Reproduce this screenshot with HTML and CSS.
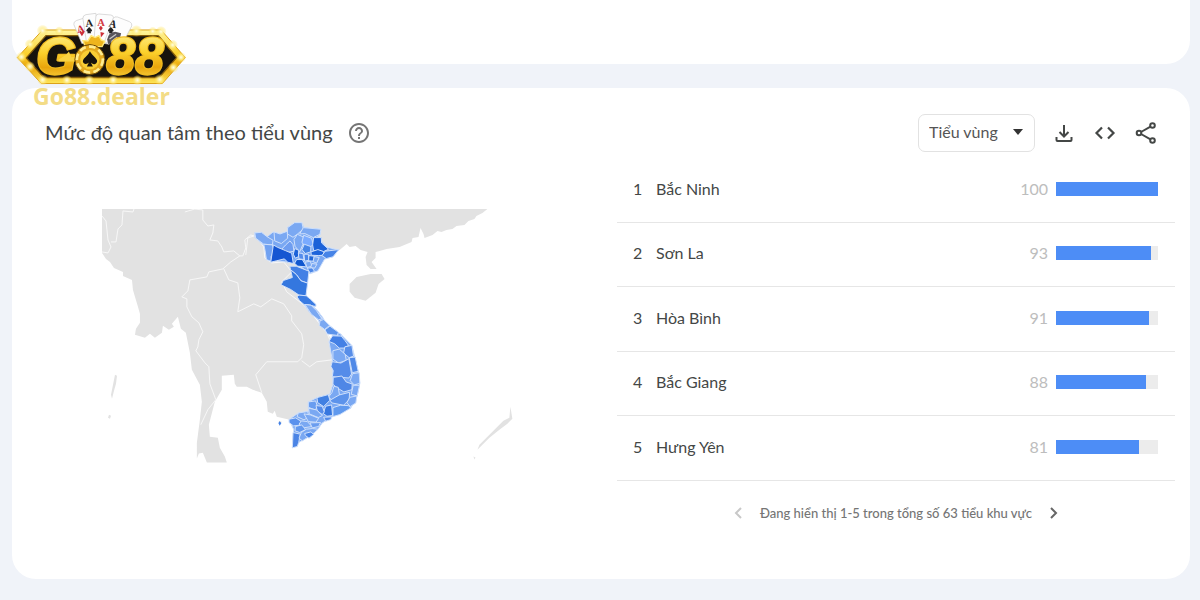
FILE: index.html
```html
<!DOCTYPE html>
<html lang="vi">
<head>
<meta charset="utf-8">
<meta name="viewport" content="width=device-width, initial-scale=1">
<title>Mức độ quan tâm theo tiểu vùng</title>
<link rel="stylesheet" href="styles.css">
</head>
<body>
<a class="brand" href="#" aria-label="Go88.dealer">
  <svg class="brand-logo" viewBox="45 35 520 225" aria-hidden="true">
    <defs>
      <linearGradient id="gold" x1="0" y1="0" x2="0" y2="1"><stop offset="0" stop-color="#fff6a0"/><stop offset=".45" stop-color="#fbd02b"/><stop offset=".7" stop-color="#e9a50c"/><stop offset="1" stop-color="#ffe658"/></linearGradient>
      <radialGradient id="glow"><stop offset="0" stop-color="#fffde8"/><stop offset=".35" stop-color="#fff2a0" stop-opacity=".9"/><stop offset="1" stop-color="#ffdf50" stop-opacity="0"/></radialGradient>
    </defs>
    <path d="M52 172 128 89H484L557 172 488 250H124Z" fill="url(#gold)" stroke="#dca117" stroke-width="3"/>
    <path d="M79 173 138 106H476L531 172 478 232H132Z" fill="#17130d" stroke="#875e0b" stroke-width="4"/>
    <g fill="#fdfdfd" stroke="#c9c9c9" stroke-width="2">
      <path d="M222 73q-2-8 7-12l27-9 30 70-40 8z"/><path d="M249 54q0-9 9-11l30-4 12 80-40 8z"/>
      <path d="M288 49q1-8 9-8l36 3q8 1 8 8l-13 80-46-8z"/><path d="M340 55q4-8 13-5l36 14q9 4 7 13l-18 34-66 18z"/>
    </g>
    <g font-family="Liberation Serif" font-weight="700" font-size="32">
      <text x="230" y="97" fill="#cc3038" transform="rotate(-12 240 85)">A</text><text x="257" y="79" fill="#222" transform="rotate(-6 268 70)">A</text>
      <text x="292" y="76" fill="#d33b44">A</text><text x="328" y="81" fill="#222" transform="rotate(15 338 70)">A</text>
    </g>
    <path fill="#cc3038" d="M240 98c-6-5 3-9 6-2 3-7 11-2 6 3l-6 9zM303 76l6 7-6 8-6-8z"/>
    <path fill="#222" d="M268 80q15 13 4 14l2 5h-12l2-5q-11-1 4-14zM333 80q15 13 4 14l2 5h-12l2-5q-11-1 4-14z"/>
    <path d="M302 95l12 3-11 14z" fill="#cc3038"/>
    <path d="M322 118q3-22 24-24l18 5-6 24-33 8z" fill="#57545a"/>
    <path d="M329 116l20-14m-14 22 17-13" stroke="#c8c8c8" stroke-width="4"/>
    <path d="M249 121 264 122 274 106 286 112 297 106 304 119 315 123 307 139H256Z" fill="#eeb51d" stroke="#ffe878" stroke-width="4"/>
    <g font-family="Liberation Sans" font-weight="700" font-style="italic" fill="url(#gold)" stroke="#f0bb22" stroke-width="7" paint-order="stroke" stroke-linejoin="round">
      <text x="108" y="221" font-size="156">G</text><text x="319" y="220" font-size="156">88</text>
    </g>
    <path d="M176 178 198 164 207 154 214 171 232 169V184H176Z" fill="#f9d242"/>
    <circle cx="270" cy="178" r="45" fill="#e4aa20" stroke="#684607" stroke-width="3"/>
    <circle cx="270" cy="178" r="39" fill="none" stroke="#ffed90" stroke-width="8" stroke-dasharray="20 10"/>
    <circle cx="270" cy="178" r="29" fill="#f9ce35"/>
    <path d="M270 153C276 166 299 178 290 188 284 195 276 191 273 187L279 199H261L267 187C262 193 250 193 249 184 249 173 264 168 270 153Z" fill="#17130d"/>
    <g fill="url(#glow)"><circle cx="128" cy="91" r="18"/><circle cx="178" cy="92" r="14"/><circle cx="410" cy="92" r="18"/><circle cx="459" cy="93" r="14"/><circle cx="484" cy="94" r="17"/><circle cx="90" cy="132" r="16"/><circle cx="64" cy="170" r="16"/><circle cx="90" cy="199" r="16"/><circle cx="128" cy="239" r="17"/><circle cx="201" cy="240" r="16"/><circle cx="268" cy="240" r="16"/><circle cx="340" cy="240" r="16"/><circle cx="413" cy="240" r="16"/><circle cx="480" cy="238" r="17"/><circle cx="521" cy="202" r="16"/><circle cx="544" cy="171" r="16"/><circle cx="519" cy="134" r="16"/></g>
  </svg>
  <span class="brand-name">Go88.dealer</span>
</a>
<div class="card card-previous"></div>
<main class="card">
  <header class="card-header">
    <h1 class="title">Mức độ quan tâm theo tiểu vùng</h1>
    <button class="icon-button" type="button" aria-label="Trợ giúp">
      <svg width="24" height="24" viewBox="0 0 24 24" fill="#757575"><path d="M11 18h2v-2h-2v2zm1-16C6.480 2 2 6.480 2 12s4.480 10 10 10 10-4.480 10-10S17.520 2 12 2zm0 18c-4.410 0-8-3.590-8-8s3.590-8 8-8 8 3.590 8 8-3.590 8-8 8zm0-14c-2.210 0-4 1.790-4 4h2c0-1.100.9-2 2-2s2 .9 2 2c0 2-3 1.750-3 5h2c0-2.250 3-2.500 3-5 0-2.210-1.790-4-4-4z"/></svg>
    </button>
    <div class="tools">
      <div class="picker"><select class="picker-select" aria-label="Độ phân giải"><option>Tiểu vùng</option><option>Thành phố</option></select></div>
      <button class="icon-button" type="button" aria-label="Tải xuống"><svg width="24" height="24" viewBox="0 0 24 24" fill="none" stroke="#444746" stroke-width="2"><path d="M12 4v11M7.500 11l4.500 4.500 4.500-4.500M4.500 16v3q0 1 1 1h13q1 0 1-1v-3"/></svg></button>
      <button class="icon-button" type="button" aria-label="Nhúng"><svg width="24" height="24" viewBox="0 0 24 24" fill="none" stroke="#444746" stroke-width="2.200"><path d="M9 6.500 3.500 12 9 17.500M15 6.500l5.500 5.500-5.500 5.500"/></svg></button>
      <button class="icon-button" type="button" aria-label="Chia sẻ"><svg width="24" height="24" viewBox="0 0 24 24" fill="none" stroke="#444746" stroke-width="2"><circle cx="18.500" cy="4.500" r="2.300"/><circle cx="5" cy="12" r="2.300"/><circle cx="18.500" cy="19.500" r="2.300"/><path d="m7 11 9.500-5.300M7 13l9.500 5.300"/></svg></button>
    </div>
  </header>
  <div class="card-body">
    <svg class="map" viewBox="102 209 412 255" role="img" aria-label="Bản đồ Việt Nam theo tiểu vùng">
      <path fill="#e2e2e2" d="M102 209H488L483 213 477 216 475 219 469 221 465 225 457 226 453 229 447 230 442 232 438 231 433 235 425 238 424 234 421 228 419 237 413 238 412 242 400 247 387 249 380 251 376 252 376 258 372 262 377 269 371 269 367 265 366 257 368 252 361 250 356 246 350 247 347 244 340 250 318 256 300 272 300 298 318 322 334 342 340 375 336 400 310 425 290 420 277 417 275 411 273 414 268 412 267 402 262 393 253 390 247 387 237 387 235 384 234 375 222 376 222 390 215 402 209 425 210 437 218 438 220 448 225 457 227 463H207L203 453 199 454 197 459 197 443 200 420 202 402 200 385 192 370 190 353 186 333 181 329 178 317 172 324 174 327 169 330 163 326 162 333 155 338 150 334 145 338 135 335 136 329 140 323 140 314 138 307 133 290 132 280 123 276 123 272 114 268 110 262 106 259 102 253Z"/>
      <path fill="#e2e2e2" d="M350 284 357 277 371 274 382 274 385 279 379 284 376 293 366 301 355 298 350 292Z"/>
      <path fill="#e2e2e2" d="M511 407 513 419 508 424 500 430 490 438 481 447 478 450 480 445 491 434 504 421 510 418ZM115 375l2 1-1 8-2 7-2 8-1-4 2-10ZM109 415l2 1-1 3-2-1ZM474 457l2 1-1 2ZM279 421l3 1-2 3Z"/>
      <g fill="none" stroke="#f7f7f7" stroke-linejoin="round">
        <path d="M102 216 106 221 108 240 111 247 108 253 102 252M134 209 133 212 123 211 122 225 118 229 116 242 111 242M185 212 195 209 203 210 203 220 208 226 214 225 213 233 210 240 218 241 222 247 224 252 234 251 240 256 243 256 246 248 245 240 251 235 257 237 264 247 265 258 272 263 284 262 292 272 282 282 287 292 304 305 325 328 331 342M240 256 231 262 223 269 209 272 207 277 190 280 188 291 182 297 187 299 187 307 192 317 199 323 203 332 199 340 198 347 196 351 205 363 209 367 210 384 216 400 208 410 201 425M224 269 229 280 238 283 240 298 238 312 254 304 261 307 272 299 284 304 292 316 292 321 302 334 304 345 302 358 298 362 267 362 256 375 262 393M302 361 310 367 317 362 333 360"/>
        <path d="M246 255 248 238 254 236"/>
      </g>
      <g transform="translate(240 210) scale(.333)" fill="#7aa8f2" stroke="#cfe0fb" stroke-width="3" stroke-linejoin="round">
        <path d="M45 68 65 67 83 80 100 66 120 71 145 66 143 53 165 38 186 37 194 53 244 58 242 74 230 84 246 94 263 112 298 120 280 140 255 148 235 183 211 192 170 160 85 150 75 110 45 82Z"/>
        <path d="M45 69 65 67 83 81 100 91 98 105 72 103 48 85Z"/><path fill="#70a1f1" d="M72 103 98 105 103 120 94 140 95 155 80 149 76 122Z"/><path d="M103 66 121 72 143 64 144 85 125 101 105 93Z"/><path fill="#6e9df0" d="M138 105 151 93 160 104 163 124 142 128 125 119Z"/><path d="M144 53 165 38 187 38 191 57 174 72 160 82 143 72Z"/><path d="M191 53 244 58 241 73 221 83 196 71 180 72Z"/><path d="M173 73 193 82 190 103 180 126 166 109 163 89Z"/><path fill="#7aabff" d="M192 76 216 85 221 105 201 117 187 97Z"/>
        <path fill="#1c62d8" d="M222 83 245 83 246 99 267 118 252 125 222 122 219 105Z"/><path fill="#4786e6" d="M194 103 214 110 213 126 197 131 187 119Z"/><path fill="#1556d2" d="M101 105 113 112 137 122 156 130 161 161 144 157 134 147 110 153 93 157Z"/><path fill="#1c62d8" d="M165 116 177 121 177 140 167 145 161 133Z"/><path fill="#0f56cf" d="M171 149 188 149 201 171 174 169 165 160Z"/><path fill="#1d63da" d="M214 126 235 119 252 125 255 136 236 137 215 136Z"/><path fill="#4784e7" d="M257 124 298 119 280 141 260 146 247 137Z"/>
        <path fill="#548cec" d="M176 129 190 131 193 149 178 147Z"/><path fill="#4a86e8" d="M193 133 206 133 208 151 195 154Z"/><path fill="#2267d7" d="M208 137 224 139 222 154 207 153Z"/><path d="M224 140 239 143 231 160 220 155Z"/><path d="M197 157 212 154 217 169 202 173Z"/><path d="M217 161 232 163 225 175 213 173Z"/><path fill="#4a86e8" d="M203 175 218 174 225 185 211 190Z"/>
        <path fill="#4380e5" d="M150 169 170 169 208 184 204 220 184 213 170 194 153 180Z"/><path fill="#3477df" d="M158 203 153 180 170 194 184 213 204 220 199 258 178 256 153 239 124 225 131 212Z"/><path fill="#3a7be2" d="M172 261 178 256 200 258 212 268 229 284 229 290 194 285 180 273Z"/><path d="M194 285 219 288 232 300 250 324 258 339 236 331 208 306Z"/>
      </g>
      <g transform="translate(270 300) scale(.333)" fill="#7aa8f2" stroke="#cfe0fb" stroke-width="3" stroke-linejoin="round">
        <path d="M106 14 124 16 158 56 181 78 215 105 247 137 266 215 271 251 263 289 244 325 190 351 158 370 145 389 117 412 87 429 68 445 72 390 58 360 86 340 116 336 116 307 142 294 180 285 190 254 188 180 178 125 190 108 150 77 147 60Z"/>
        <path d="M106 14 124 16 141 33 157 57 147 60 125 43Z"/><path d="M151 63 162 59 180 77 165 89 149 77Z"/><path fill="#5c93eb" d="M166 90 181 79 207 98 204 107 173 103Z"/><path d="M206 98 216 105 216 114 204 109Z"/>
        <path fill="#4480e5" d="M189 108 215 109 226 122 237 137 224 145 209 145 195 132 178 125Z"/><path fill="#588ee8" d="M226 141 247 137 252 169 239 174 222 160Z"/><path d="M190 153 209 148 227 164 230 182 207 190 190 178Z"/><path fill="#558ce9" d="M188 186 214 190 238 177 246 223 238 235 188 231 191 213 184 200Z"/><path fill="#5089e7" d="M239 174 257 172 266 215 248 219Z"/><path d="M249 222 269 219 271 251 254 256 242 243Z"/><path fill="#4f87e6" d="M191 233 217 229 230 247 248 253 247 270 223 277 202 264 190 254Z"/>
        <path d="M193 260 206 263 211 294 185 300 177 292 187 279Z"/><path d="M251 257 270 257 263 289 245 284Z"/><path fill="#5c93eb" d="M209 286 240 278 239 300 222 317 187 310 181 302Z"/><path d="M241 293 262 289 259 310 242 321 232 309Z"/><path fill="#6099ee" d="M190 324 213 317 236 318 244 325 211 345 190 351Z"/><path fill="#4180e2" d="M142 294 176 285 181 302 162 321 144 309Z"/><path fill="#3777df" d="M168 320 186 316 189 348 172 350 161 342Z"/><path fill="#558ce9" d="M162 353 186 352 184 360 168 365Z"/>
        <path fill="#699df0" d="M116 307 138 304 144 322 136 331 116 323Z"/><path fill="#558ce9" d="M139 318 158 320 164 337 158 345 143 334Z"/><path d="M117 326 141 331 158 348 146 354 119 343Z"/><path d="M86 340 114 336 118 352 103 361 82 351Z"/><path fill="#5a91ed" d="M58 359 78 355 94 365 92 377 71 379 58 369Z"/><path d="M103 343 122 346 147 356 139 368 116 366Z"/><path d="M95 364 113 366 127 381 101 385 88 374Z"/><path fill="#6b9def" d="M121 370 153 369 147 381 128 385Z"/><path fill="#6398ed" d="M77 381 96 376 108 390 90 399 76 394Z"/><path fill="#4b84e5" d="M70 399 92 404 87 429 83 441 68 445Z"/><path d="M95 399 110 389 128 387 145 389 134 400 117 412 98 424 88 416Z"/><path fill="#4a86e8" d="M105 402 124 397 132 405 118 416 107 408Z"/>
        <path fill="#4380e5" stroke="none" d="M29 365l6 5-5 9-4-8z"/>
      </g>
    </svg>
    <section class="ranking">
      <table class="table">
        <tbody>
          <tr><td class="rank">1</td><th class="region" scope="row">Bắc Ninh</th><td class="score">100</td><td class="meter"><div class="track"><div class="fill" style="width:100%"></div></div></td></tr>
          <tr><td class="rank">2</td><th class="region" scope="row">Sơn La</th><td class="score">93</td><td class="meter"><div class="track"><div class="fill" style="width:93%"></div></div></td></tr>
          <tr><td class="rank">3</td><th class="region" scope="row">Hòa Bình</th><td class="score">91</td><td class="meter"><div class="track"><div class="fill" style="width:91%"></div></div></td></tr>
          <tr><td class="rank">4</td><th class="region" scope="row">Bắc Giang</th><td class="score">88</td><td class="meter"><div class="track"><div class="fill" style="width:88%"></div></div></td></tr>
          <tr><td class="rank">5</td><th class="region" scope="row">Hưng Yên</th><td class="score">81</td><td class="meter"><div class="track"><div class="fill" style="width:81%"></div></div></td></tr>
        </tbody>
      </table>
      <nav class="pager" aria-label="Phân trang">
        <button class="icon-button" type="button" aria-label="Trang trước" disabled><svg width="20" height="20" viewBox="0 0 20 20" fill="none" stroke="#c8c8c8" stroke-width="2"><path d="m12 5-5 5 5 5"/></svg></button>
        <span class="pager-text">Đang hiển thị 1-5 trong tổng số 63 tiểu khu vực</span>
        <button class="icon-button" type="button" aria-label="Trang sau"><svg width="20" height="20" viewBox="0 0 20 20" fill="none" stroke="#666" stroke-width="2"><path d="m8 5 5 5-5 5"/></svg></button>
      </nav>
    </section>
  </div>
</main>
</body>
</html>
```
FILE: styles.css
```css
* { box-sizing: border-box; }
body {
  margin: 0;
  padding: 0 10px 21px 12px;
  background: #f0f3f9;
  color: #444746;
  font-family: Lato, "Noto Sans", sans-serif;
}
.brand {
  position: absolute;
  top: 12px;
  left: 15px;
  width: 173px;
  text-decoration: none;
}
.brand-logo { display: block; width: 100%; overflow: visible; }
.brand-name {
  display: block;
  margin-top: -3px;
  padding-left: 18px;
  color: #f3dc86;
  font: 700 23px/24px "Open Sans", sans-serif;
}
.card {
  padding: 26px 15px 56px 0;
  border-radius: 24px;
  background: #fff;
}
.card-previous {
  height: 64px;
  margin-bottom: 24px;
  padding: 0;
  border-radius: 0 0 24px 24px;
}
.card-header {
  display: flex;
  align-items: center;
  gap: 14px;
  margin-bottom: 7px;
  padding: 0 17px 0 33px;
}
.title { margin: 0; padding-bottom: 2px; font-size: 20px; font-weight: 400; line-height: 28px; }
.icon-button {
  display: flex;
  padding: 0;
  border: 0;
  background: none;
  cursor: pointer;
}
.tools { display: flex; align-items: center; gap: 17px; margin-left: auto; }
.picker { position: relative; }
.picker::after {
  position: absolute;
  top: 15px;
  right: 12px;
  border: 5px solid transparent;
  border-top: 6px solid #333;
  border-bottom: 0;
  content: "";
  pointer-events: none;
}
.picker-select {
  width: 117px;
  height: 38px;
  padding: 0 10px 3px;
  border: 1px solid #e2e2e2;
  border-radius: 7px;
  background: #fff;
  color: #555;
  font: inherit;
  font-size: 16px;
  appearance: none;
}
.card-body { display: grid; grid-template-columns: 605fr 558fr; }
.map { width: 68%; margin: 50px 0 0 90px; }
.table {
  width: 100%;
  height: 322px;
  border-collapse: collapse;
  font-size: 16px;
  line-height: 20px;
}
.table td, .table th { padding: 0 0 3px; border-bottom: 1px solid #e6e6e6; font-weight: 400; text-align: left; }
.table .rank { width: 39px; padding-left: 16px; }
.table .score { width: 60px; padding-right: 8px; color: #bdbdbd; text-align: right; }
.table .meter { width: 119px; padding-right: 17px; }
.track { height: 14px; background: #ececec; }
.fill { height: 100%; background: #4d8df6; }
.pager { display: flex; align-items: center; justify-content: center; gap: 11px; margin-top: 22px; }
.pager-text { color: #757575; font-size: 13px; font-weight: 500; line-height: 20px; }
```
